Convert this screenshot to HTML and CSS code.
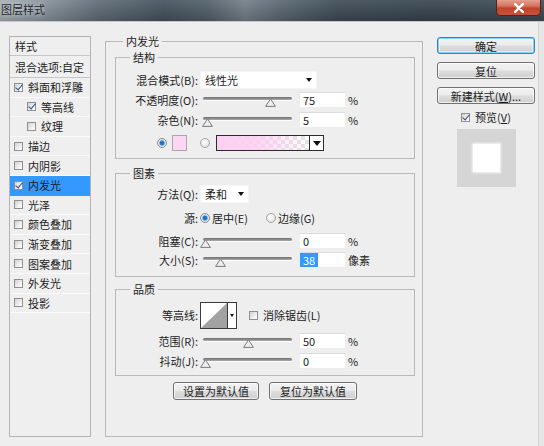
FILE: index.html
```html
<!DOCTYPE html>
<html lang="zh-CN">
<head>
<meta charset="utf-8">
<title>图层样式</title>
<link rel="stylesheet" href="styles.css">
</head>
<body>
<div class="win">
  <header class="titlebar">
    <span class="title">图层样式</span>
    <span class="close"><svg width="12" height="10" viewBox="0 0 12 10"><path d="M2.2 1.2 L9.8 8.8 M9.8 1.2 L2.2 8.8" stroke="#fff" stroke-width="2.4" stroke-linecap="round"/></svg></span>
  </header>
  <main class="dlg">
    <nav class="list">
      <div class="li head">样式</div>
      <div class="li blend">混合选项:自定</div>
      <div class="li"><span class="cb on"></span>斜面和浮雕</div>
      <div class="li sub"><span class="cb on"></span>等高线</div>
      <div class="li sub"><span class="cb"></span>纹理</div>
      <div class="li"><span class="cb"></span>描边</div>
      <div class="li"><span class="cb"></span>内阴影</div>
      <div class="li active"><span class="cb on"></span>内发光</div>
      <div class="li"><span class="cb"></span>光泽</div>
      <div class="li"><span class="cb"></span>颜色叠加</div>
      <div class="li"><span class="cb"></span>渐变叠加</div>
      <div class="li"><span class="cb"></span>图案叠加</div>
      <div class="li"><span class="cb"></span>外发光</div>
      <div class="li"><span class="cb"></span>投影</div>
    </nav>

    <fieldset class="panel">
      <legend>内发光</legend>

      <fieldset class="grp g1">
        <legend>结构</legend>
        <div class="row h21">
          <span class="lbl">混合模式(B):</span>
          <span class="dd w117"><span>线性光</span><i class="arr"></i></span>
        </div>
        <div class="row h20">
          <span class="lbl">不透明度(O):</span>
          <span class="sld" style="--p:0.75"><i class="track"></i><svg class="thumb" width="11" height="9" viewBox="0 0 11 9"><path d="M5.5 .8 L10.4 8.4 H.6 Z" fill="#eeeeee" stroke="#7a7a7a"/></svg></span>
          <span class="inp">75</span><span class="unit">%</span>
        </div>
        <div class="row h20">
          <span class="lbl">杂色(N):</span>
          <span class="sld" style="--p:0.05"><i class="track"></i><svg class="thumb" width="11" height="9" viewBox="0 0 11 9"><path d="M5.5 .8 L10.4 8.4 H.6 Z" fill="#eeeeee" stroke="#7a7a7a"/></svg></span>
          <span class="inp">5</span><span class="unit">%</span>
        </div>
        <div class="row crow">
          <span class="rd on"></span>
          <span class="csw"></span>
          <span class="rd rd2"></span>
          <span class="grad"><span class="fill"></span><span class="drop"><i class="arr big"></i></span></span>
        </div>
      </fieldset>

      <fieldset class="grp g2">
        <legend>图素</legend>
        <div class="row h20">
          <span class="lbl">方法(Q):</span>
          <span class="dd w49"><span>柔和</span><i class="arr"></i></span>
        </div>
        <div class="row h28">
          <span class="lbl">源:</span>
          <span class="opt opt1"><span class="rd on"></span>居中(E)</span>
          <span class="opt"><span class="rd"></span>边缘(G)</span>
        </div>
        <div class="row h18">
          <span class="lbl">阻塞(C):</span>
          <span class="sld" style="--p:0.02"><i class="track"></i><svg class="thumb" width="11" height="9" viewBox="0 0 11 9"><path d="M5.5 .8 L10.4 8.4 H.6 Z" fill="#eeeeee" stroke="#7a7a7a"/></svg></span>
          <span class="inp">0</span><span class="unit">%</span>
        </div>
        <div class="row h20">
          <span class="lbl">大小(S):</span>
          <span class="sld" style="--p:0.19"><i class="track"></i><svg class="thumb" width="11" height="9" viewBox="0 0 11 9"><path d="M5.5 .8 L10.4 8.4 H.6 Z" fill="#eeeeee" stroke="#7a7a7a"/></svg></span>
          <span class="inp selin"><span class="hl">38</span></span><span class="unit">像素</span>
        </div>
      </fieldset>

      <fieldset class="grp g3">
        <legend>品质</legend>
        <div class="row h28">
          <span class="lbl">等高线:</span>
          <span class="contour"><svg width="26" height="25" viewBox="0 0 26 25"><path d="M0 25 L26 0 V25 Z" fill="#a2a2a2"/></svg><span class="drop"><i class="arr small"></i></span></span>
          <span class="aa"><span class="cb"></span>消除锯齿(L)</span>
        </div>
        <div class="row h24">
          <span class="lbl">范围(R):</span>
          <span class="sld" style="--p:0.5"><i class="track"></i><svg class="thumb" width="11" height="9" viewBox="0 0 11 9"><path d="M5.5 .8 L10.4 8.4 H.6 Z" fill="#eeeeee" stroke="#7a7a7a"/></svg></span>
          <span class="inp">50</span><span class="unit">%</span>
        </div>
        <div class="row h16">
          <span class="lbl">抖动(J):</span>
          <span class="sld" style="--p:0.02"><i class="track"></i><svg class="thumb" width="11" height="9" viewBox="0 0 11 9"><path d="M5.5 .8 L10.4 8.4 H.6 Z" fill="#eeeeee" stroke="#7a7a7a"/></svg></span>
          <span class="inp">0</span><span class="unit">%</span>
        </div>
      </fieldset>

      <div class="btnrow">
        <button class="btn b86">设置为默认值</button>
        <button class="btn b88">复位为默认值</button>
      </div>
    </fieldset>

    <aside class="side">
      <button class="btn def">确定</button>
      <button class="btn">复位</button>
      <button class="btn">新建样式(<u>W</u>)...</button>
      <label class="pv"><span class="cb on"></span>预览(<u>V</u>)</label>
      <div class="preview"><div class="sq"></div></div>
    </aside>
  </main>
</div>
</body>
</html>
```

FILE: styles.css
```css
* { box-sizing: border-box; }
html, body { margin: 0; padding: 0; }
body {
  width: 544px; height: 446px; overflow: hidden;
  background: #e6e6e6;
  font-family: "Noto Sans CJK SC", "Noto Sans", sans-serif;
  font-size: 11px; line-height: 16px; color: #1c1c1c;
}
.win { width: 544px; height: 446px; display: flex; flex-direction: column; }

/* title bar */
.titlebar {
  height: 22px; flex: none;
  display: flex; justify-content: space-between; align-items: flex-start;
  border-bottom: 1px solid #c3c9ce;
  background:
    linear-gradient(rgba(255,255,255,.10), rgba(0,0,0,.14)),
    linear-gradient(90deg, #a4adb3 0%, #8a959d 7%, #5d6a75 18%, #414f5b 30%, #4f5c67 38%, #717d87 45%, #56636e 52%, #3b4854 62%, #34414c 80%, #3c4954 100%);
}
.title { padding-left: 1px; line-height: 19px; font-size: 11px; color: #20282e; text-shadow: 0 0 4px rgba(255,255,255,.75); }
.close {
  width: 45px; height: 16px; margin-right: 3px;
  display: flex; align-items: center; justify-content: center;
  border: 1px solid #5a2016; border-top: 0; border-radius: 0 0 5px 5px;
  background: linear-gradient(#e3a08f 0%, #d3735c 40%, #c0442c 55%, #c9523b 100%);
}

/* dialog body */
.dlg {
  flex: 1; width: 539px;
  display: flex; align-items: stretch;
  padding: 11px 0 9px 9px;
  background: #eeeeee;
  border-right: 1px solid #d6d6d6;
}

/* style list */
.list { width: 82px; flex: none; margin-top: 3px; border: 1px solid #b3b3b3; background: #efefef; }
.li { display: flex; align-items: center; height: 19.6px; padding-left: 4px; border-bottom: 1px solid #fafafa; white-space: nowrap; }
.li.head { height: 19px; padding-left: 5px; border-bottom-color: #c6c6c6; }
.li.blend { height: 22px; padding-left: 5px; border-bottom-color: #c6c6c6; }
.li.sub { padding-left: 17px; }
.li.active { background: #3399ff; border-bottom-color: #3399ff; }

.cb {
  position: relative; flex: none;
  width: 9px; height: 9px; margin-right: 5px;
  border: 1px solid #8f8f8f;
  background: linear-gradient(135deg, #d2d2d2, #f4f4f4 70%, #fff);
}
.cb.on::after {
  content: ""; position: absolute; left: 2px; top: -1px;
  width: 3px; height: 6px;
  border: solid #2a4a8c; border-width: 0 1.6px 1.6px 0;
  transform: rotate(40deg);
}

/* main panel */
fieldset { margin: 0; min-width: 0; }
legend { padding: 0 3px; line-height: 16px; font-size: 11px; }
.panel { flex: none; width: 318px; margin-left: 14px; padding: 0 7px 0 9px; border: 1px solid #b9b9b9; }
.panel > legend { margin-left: 8px; }
.grp { padding: 0; border: 1px solid #b9b9b9; }
.grp > legend { margin-left: 14px; }
.g1 { padding: 4px 0 2px; }
.g2 { padding: 3px 0 6px; margin-top: 6px; }
.g3 { padding: 4px 0 6px; margin-top: 4px; }

.row { display: flex; align-items: center; white-space: nowrap; }
.h16 { height: 16px; } .h18 { height: 18px; } .h20 { height: 20px; }
.h21 { height: 21px; } .h24 { height: 24px; } .h28 { height: 28px; }
.lbl { width: 82px; flex: none; text-align: right; margin-right: 2px; }

.dd {
  height: 18px; display: flex; align-items: center; justify-content: space-between;
  background: #fff; border: 1px solid #f5f5f5; padding: 0 4px;
}
.w117 { width: 117px; }
.w49 { width: 49px; }
.arr { display: block; width: 0; height: 0; border-left: 3.5px solid transparent; border-right: 3.5px solid transparent; border-top: 4px solid #111; }
.arr.big { border-left-width: 4px; border-right-width: 4px; border-top-width: 5px; }
.arr.small { border-left-width: 2.5px; border-right-width: 2.5px; border-top-width: 3px; }

.sld { position: relative; flex: none; width: 96px; height: 14px; margin-right: 3px; }
.track {
  position: absolute; left: 3px; right: 4px; top: 4px; height: 3px;
  border-radius: 2px;
  background: linear-gradient(#6c6c6c, #ababab);
  box-shadow: 0 1px 0 rgba(255,255,255,.9);
}
.thumb { position: absolute; top: 5px; left: calc(var(--p) * 89px - 2px); }

.inp {
  flex: none; width: 47px; height: 16px;
  background: #fff; border: 1px solid #ededed; border-top-color: #dcdcdc;
  padding-left: 3px; line-height: 14px; color: #222;
}
.inp.selin { padding-left: 0; }
.hl { display: inline-block; height: 14px; padding: 0 3px; background: #3399ff; color: #fff; }
.unit { margin-left: 2px; }

/* color row */
.crow { height: 26px; padding-left: 41px; }
.rd {
  flex: none; width: 10px; height: 10px; border-radius: 50%;
  border: 1px solid #a3a3a3;
  background: radial-gradient(circle at 40% 35%, #fff, #dadada);
}
.rd.on {
  border-color: #8b8b8b;
  background: radial-gradient(circle, #2470c2 0, #2470c2 1.8px, #9acdf0 2.8px, #e6edf2 3.6px, #cfd3d6 5px);
}
.csw { flex: none; width: 15px; height: 16px; margin-left: 5px; border: 1px solid #a9a9a9; background: #fdd6f4; }
.rd2 { margin-left: 13px; }
.grad { display: flex; width: 108px; height: 16px; margin-left: 6px; border: 1px solid #2c2c2c; }
.grad .fill {
  flex: 1;
  background:
    linear-gradient(90deg, #fccff1 0%, rgba(252,207,241,.85) 45%, rgba(252,207,241,0) 100%),
    conic-gradient(#e2e2e2 25%, #fff 0 50%, #e2e2e2 0 75%, #fff 0) 0 0 / 8px 8px;
}
.grad .drop { width: 14px; border-left: 1px solid #2c2c2c; background: #fff; display: flex; align-items: center; justify-content: center; }

/* source row */
.opt { display: flex; align-items: center; }
.opt .rd { margin-right: 2px; }
.opt1 { width: 66px; }

/* contour */
.contour { flex: none; display: flex; width: 37px; height: 27px; border: 1px solid #3a3a3a; background: #fff; }
.contour svg { display: block; }
.contour .drop { width: 9px; border-left: 1px solid #3a3a3a; display: flex; align-items: center; justify-content: center; }
.aa { display: flex; align-items: center; margin-left: 12px; }

/* buttons */
.btn {
  height: 18px; padding: 0; font: inherit; line-height: 14px; color: #1c1c1c;
  border: 1px solid #707070; border-radius: 3px;
  background: linear-gradient(#f3f3f3 0%, #ebebeb 48%, #dddddd 52%, #cfcfcf 100%);
  box-shadow: inset 0 0 0 1px rgba(255,255,255,.7);
}
.btnrow { display: flex; justify-content: center; gap: 10px; margin-top: 6px; }
.b86 { width: 86px; }
.b88 { width: 88px; }

.side { flex: none; width: 98px; margin: 4px 0 0 14px; display: flex; flex-direction: column; }
.side .btn { height: 17px; margin-bottom: 8px; }
.btn.def {
  border-color: #3c7fb1;
  box-shadow: inset 0 0 0 1px #7fd3f7, inset 0 0 0 2px rgba(255,255,255,.5);
}
.pv { display: flex; align-items: center; justify-content: center; height: 14px; margin-top: -2px; }
.preview {
  align-self: center; width: 59px; height: 58px; margin-top: 5px;
  background: #d5d5d5;
  display: flex; align-items: center; justify-content: center;
}
.sq { width: 27px; height: 28px; background: #fff; box-shadow: 0 0 2px 1px rgba(255,255,255,.8); }
```
